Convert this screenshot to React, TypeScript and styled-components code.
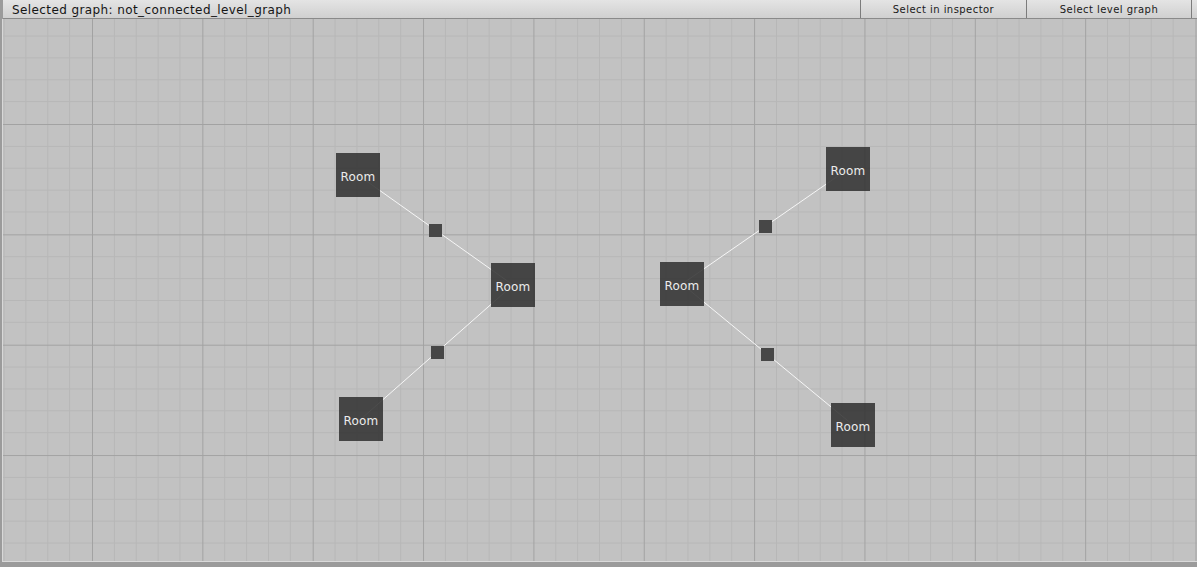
import React from "react";
import styled, { createGlobalStyle } from "styled-components";

const Global = createGlobalStyle`
  html, body { margin: 0; padding: 0; }
  body { width: 1197px; height: 567px; overflow: hidden; background: #8e8e8e; font-family: "DejaVu Sans", Verdana, sans-serif; }
  #root { width: 1197px; height: 567px; }
`;

const Page = styled.div`
  width: 1197px;
  height: 567px;
  display: flex;
  flex-direction: column;
  background: #9b9b9b;
  box-sizing: border-box;
`;

const Toolbar = styled.div`
  height: 18px;
  flex: none;
  display: flex;
  align-items: stretch;
  margin-left: 3px;
  background: linear-gradient(#e4e4e4, #d0d0d0);
  border-bottom: 1px solid #8a8a8a;
`;

const Title = styled.div`
  flex: 1;
  display: flex;
  align-items: center;
  padding-left: 9px;
  padding-top: 2px;
  font-size: 12px;
  letter-spacing: 0.4px;
  color: #151515;
  white-space: nowrap;
`;

const ToolButton = styled.button<{ $last?: boolean }>`
  width: 166px;
  flex: none;
  margin: 0;
  padding: 1px 0 0 0;
  border: none;
  border-left: 1px solid #7c7c7c;
  border-right: ${(p) => (p.$last ? "1px solid #7c7c7c" : "none")};
  background: linear-gradient(#e4e4e4, #d0d0d0);
  font-family: "DejaVu Sans", Verdana, sans-serif;
  font-size: 10px;
  letter-spacing: 0.45px;
  color: #1a1a1a;
  display: flex;
  align-items: center;
  justify-content: center;
`;

const ToolSpacer = styled.div`
  width: 5px;
  flex: none;
`;

const CanvasFrame = styled.div`
  flex: 1;
  margin-left: 2px;
  margin-bottom: 5px;
  border-left: 1px solid #d8d8d8;
  border-bottom: 1px solid #dadada;
  position: relative;
  overflow: hidden;
  background: #c2c2c2;
`;

const GridSvg = styled.svg`
  position: absolute;
  left: 0;
  top: 0;
  width: 100%;
  height: 100%;
  display: block;
`;

const Node = styled.div<{ $size: number }>`
  position: absolute;
  width: ${(p) => p.$size}px;
  height: ${(p) => p.$size}px;
  background: rgba(48, 48, 48, 0.86);
  display: flex;
  align-items: center;
  justify-content: center;
  padding-top: 3px;
  color: #ececec;
  font-size: 12px;
  letter-spacing: 0.2px;
  box-sizing: border-box;
`;

const Connector = styled.div`
  position: absolute;
  width: 13px;
  height: 13px;
  background: #474747;
`;

const OX = 3;
const OY = 19;
const MAJOR = 110.35;
const MINOR = MAJOR / 5;

type Room = { id: string; x: number; y: number };
const rooms: Room[] = [
  { id: "a", x: 336, y: 153 },
  { id: "b", x: 491, y: 263 },
  { id: "c", x: 339, y: 397 },
  { id: "d", x: 826, y: 147 },
  { id: "e", x: 660, y: 262 },
  { id: "f", x: 831, y: 403 },
];
const edges: [string, string][] = [
  ["a", "b"],
  ["c", "b"],
  ["e", "d"],
  ["e", "f"],
];
const SIZE = 44;

const byId = (id: string) => rooms.find((r) => r.id === id)!;
const center = (r: Room) => ({ x: r.x + SIZE / 2 - OX, y: r.y + SIZE / 2 - OY });

export default function App() {
  const majorX = 92 - OX;
  const majorY = 124 - OY;
  return (
    <>
      <Global />
      <Page>
        <Toolbar>
          <Title>Selected graph: not_connected_level_graph</Title>
          <ToolButton>Select in inspector</ToolButton>
          <ToolButton $last>Select level graph</ToolButton>
          <ToolSpacer />
        </Toolbar>
        <CanvasFrame>
          <GridSvg>
            <defs>
              <pattern
                id="grid"
                x={majorX}
                y={majorY}
                width={MAJOR}
                height={MAJOR}
                patternUnits="userSpaceOnUse"
              >
                {[1, 2, 3, 4].map((k) => (
                  <line
                    key={"mv" + k}
                    x1={k * MINOR}
                    x2={k * MINOR}
                    y1={0}
                    y2={MAJOR}
                    stroke="#b7b7b7"
                    strokeWidth={1}
                    shapeRendering="crispEdges"
                  />
                ))}
                {[1, 2, 3, 4].map((k) => (
                  <line
                    key={"mh" + k}
                    y1={k * MINOR}
                    y2={k * MINOR}
                    x1={0}
                    x2={MAJOR}
                    stroke="#b7b7b7"
                    strokeWidth={1}
                    shapeRendering="crispEdges"
                  />
                ))}
                <line x1={0.5} x2={0.5} y1={0} y2={MAJOR} stroke="#a2a2a2" strokeWidth={1} shapeRendering="crispEdges" />
                <line y1={0.5} y2={0.5} x1={0} x2={MAJOR} stroke="#a2a2a2" strokeWidth={1} shapeRendering="crispEdges" />
              </pattern>
            </defs>
            <rect x={0} y={0} width="100%" height="100%" fill="url(#grid)" />
            {edges.map(([f, t]) => {
              const a = center(byId(f));
              const b = center(byId(t));
              return (
                <line
                  key={f + t}
                  x1={a.x}
                  y1={a.y}
                  x2={b.x}
                  y2={b.y}
                  stroke="#f6f6f6"
                  strokeWidth={1}
                />
              );
            })}
          </GridSvg>
          {edges.map(([f, t]) => {
            const a = center(byId(f));
            const b = center(byId(t));
            return (
              <Connector
                key={"c" + f + t}
                style={{ left: Math.round((a.x + b.x) / 2 - 6.5), top: Math.round((a.y + b.y) / 2 - 6.5) }}
              />
            );
          })}
          {rooms.map((r) => (
            <Node key={r.id} $size={SIZE} style={{ left: r.x - OX, top: r.y - OY }}>
              Room
            </Node>
          ))}
        </CanvasFrame>
      </Page>
    </>
  );
}
